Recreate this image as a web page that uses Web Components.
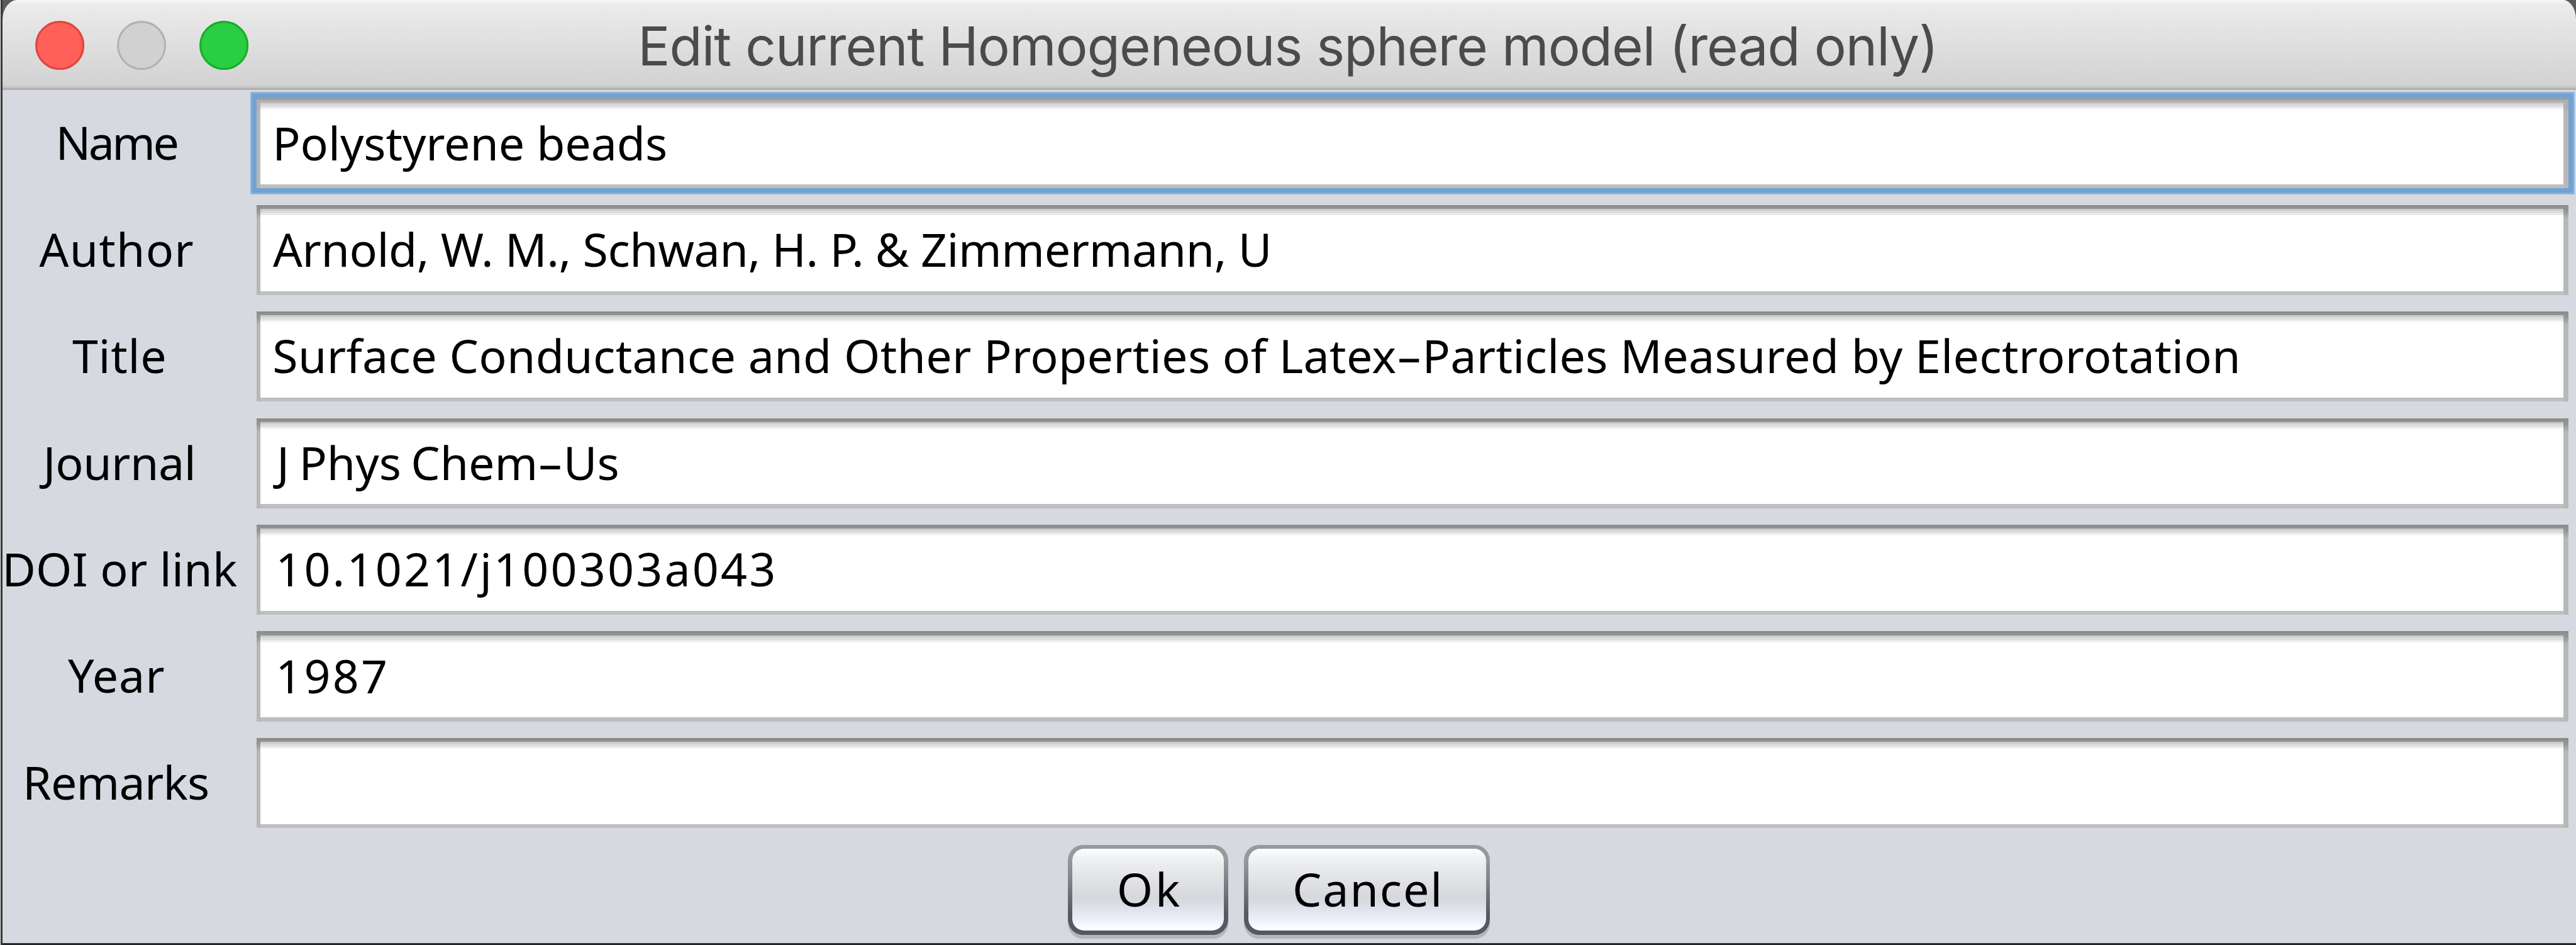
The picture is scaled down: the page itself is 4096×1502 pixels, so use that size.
<!DOCTYPE html>
<html lang="en">
<head>
<meta charset="utf-8">
<title>Edit current Homogeneous sphere model (read only)</title>
<style>
  /* 1rem is one hundred design units */
  html { font-size: 78.198px; }
  body { margin: 0; width: 4096px; height: 1502px; overflow: hidden; background: #3a3c3b; }
  .dash { display: inline-block; transform: scaleX(1.75); margin: 0 .12em 0 .11em; }
</style>
</head>
<body>
<dialog-window>
  <title-bar slot="title"><fit-text start="13.01" span="26.24">Edit current Homogeneous sphere model (read only)</fit-text></title-bar>
  <form-row focused><fit-text slot="label" start="1.17" span="2.38">Name</fit-text><fit-text start=".33" span="7.90">Polystyrene beads</fit-text></form-row>
  <form-row><fit-text slot="label" start=".75" span="3.13">Author</fit-text><fit-text start=".25" span="20.24">Arnold, W. M., Schwan, H. P. &amp; Zimmermann, U</fit-text></form-row>
  <form-row><fit-text slot="label" start="1.42" span="1.87">Title</fit-text><fit-text start=".28" span="39.91">Surface Conductance and Other Properties of Latex<span class="dash">-</span>Particles Measured by Electrorotation</fit-text></form-row>
  <form-row><fit-text slot="label" start=".75" span="3.11">Journal</fit-text><fit-text start=".25" span="7.00" style="word-spacing:-.05em">J Phys Chem<span class="dash">-</span>Us</fit-text></form-row>
  <form-row><fit-text slot="label" start=".08" span="4.69">DOI or link</fit-text><fit-text start=".38" span="10.04">10.1021/j100303a043</fit-text></form-row>
  <form-row><fit-text slot="label" start="1.33" span="1.96">Year</fit-text><fit-text start=".38" span="2.16">1987</fit-text></form-row>
  <form-row><fit-text slot="label" start=".50" span="3.67">Remarks</fit-text></form-row>
  <push-button slot="actions" style="width:3.25rem"><fit-text start=".96" span="1.23">Ok</fit-text></push-button>
  <push-button slot="actions" style="width:5rem"><fit-text start=".95" span="2.92">Cancel</fit-text></push-button>
</dialog-window>

<script>
const root = (el, html) => {
  const s = el.attachShadow({ mode: 'open' });
  s.innerHTML = html;
  return s;
};

/* One line of text whose ink begins at `start` and covers `span` (rem). */
class FitText extends HTMLElement {
  connectedCallback() {
    const s = root(this, `<style>
      :host { display: block; white-space: nowrap; }
      .line { display: inline-block; font-kerning: normal; font-variant-ligatures: none; }
    </style><span class="line"><slot></slot></span>`);
    const rem = parseFloat(getComputedStyle(document.documentElement).fontSize);
    const cs = getComputedStyle(this);
    const ctx = document.createElement('canvas').getContext('2d');
    ctx.font = `${cs.fontWeight} ${cs.fontSize} ${cs.fontFamily}`;
    const text = this.textContent;
    const m = ctx.measureText(text);
    const left = -m.actualBoundingBoxLeft;
    const right = m.width - m.actualBoundingBoxRight;
    const ink = s.querySelector('.line').getBoundingClientRect().width - left - right;
    const gap = (this.getAttribute('span') * rem - ink) / (text.length - 1);
    this.style.letterSpacing = gap.toFixed(3) + 'px';
    this.style.marginLeft = (this.getAttribute('start') * rem - left).toFixed(2) + 'px';
  }
}

class TitleBar extends HTMLElement {
  constructor() {
    super();
    root(this, `<style>
      :host { display: flex; height: 1.83rem; box-sizing: border-box; overflow: hidden;
        color: #4b4b4b; font: 400 1.09rem/1.877rem Inter, "Liberation Sans", sans-serif;
        background:
          linear-gradient(#c4c4c4, #c4c4c4) 0 1.75rem / 100% .04rem no-repeat,
          linear-gradient(#b0b0b0, #b0b0b0) 0 1.79rem / 100% .04rem no-repeat,
          linear-gradient(#f6f6f6 0 .04rem, #eeeeee .04rem .08rem, #ebebeb .1rem, #d2d2d2 1.75rem);
        border-radius: .30rem .26rem 0 0 / .40rem .40rem 0 0; }
      .lights { display: flex; gap: .665rem; padding: .42rem 0 0 .67rem; height: 1rem; width: 4.33rem; box-sizing: content-box; margin-right: -5rem; }
      svg { width: 1rem; height: 1rem; flex: none; display: block; }
      circle { stroke-width: 4; }
    </style>
    <div class="lights">
      <svg viewBox="0 0 100 100"><circle cx="50" cy="50" r="48" fill="#ff6058" stroke="#e2443e"/></svg>
      <svg viewBox="0 0 100 100"><circle cx="50" cy="50" r="48" fill="#d1d1d1" stroke="#b2b2b2"/></svg>
      <svg viewBox="0 0 100 100"><circle cx="50" cy="50" r="48" fill="#29ce42" stroke="#17ae29"/></svg>
    </div>
    <slot></slot>`);
  }
}

class FormRow extends HTMLElement {
  constructor() {
    super();
    root(this, `<style>
      :host { display: flex; height: 1.83rem; color: #000; }
      .label { width: 5.17rem; flex: none; line-height: 1.79rem; }
      .field { flex: 1; box-sizing: border-box; padding: .08rem .09rem .08rem .08rem; line-height: 1.63rem;
        background:
          linear-gradient(#bfbfbf, #bfbfbf) .08rem 100% / calc(100% - .17rem) .08rem no-repeat,
          linear-gradient(#8b8c8c 0 .04rem, #929292 .04rem .1rem, #b8b8b8 .28rem); }
      .paper { height: 100%;
        background: linear-gradient(#cccccc 0 .04rem, #dcdcdc .04rem .085rem, #ececec .085rem .125rem, #fdfdfd .125rem .165rem, #fff .165rem); }
      :host([focused]) .field { box-shadow: 0 0 0 .09rem #70a3d3, 0 0 0 .125rem #8aaed8;
        background:
          linear-gradient(#bfbfbf, #bfbfbf) .08rem 100% / calc(100% - .17rem) .08rem no-repeat,
          linear-gradient(#a0a0a0 0 .04rem, #b0b0b0 .04rem .24rem, #b8b8b8 .25rem); }
    </style>
    <div class="label"><slot name="label"></slot></div>
    <div class="field"><div class="paper"><slot></slot></div></div>`);
  }
}

class PushButton extends HTMLElement {
  constructor() {
    super();
    root(this, `<style>
      :host { display: block; height: 1.83rem; box-sizing: border-box; padding: .08rem;
        border-radius: .31rem; line-height: 1.645rem; color: #000;
        background: linear-gradient(#949a9e 0 16%, #7d8387 40%, #565960 78%);
        box-shadow: 0 .08rem 0 #b4b7bc; }
      .face { height: 100%; border-radius: .24rem;
        background: linear-gradient(#fbfcfc 0, #f2f3f4 10%, #e9eaec 24%, #d6d8dc 58%, #d6d9e1 64%, #e3e7f0 78%, #edf1fb 88%, #fbfcff 97%); }
    </style><div class="face"><slot></slot></div>`);
  }
}

class DialogWindow extends HTMLElement {
  constructor() {
    super();
    root(this, `<style>
      :host { display: block; height: 1502px; box-sizing: border-box; padding: 0 0 .04rem .05rem;
        font: 400 .94rem/1.77rem "Noto Sans", "Open Sans", sans-serif;
        background: linear-gradient(90deg, #e4e6e6 0 .013rem, #373b38 .013rem .05rem, #242528 .05rem); }
      .win { height: 100%; display: flex; flex-direction: column; background: linear-gradient(#5a5a5a 0 .5rem, #d6d9e0 .5rem); }
      .form { display: flex; flex-direction: column; gap: .3367rem; padding: .17rem .16rem 0 0; }
      .actions { display: flex; gap: .33rem; padding: .34rem 0 0 21.67rem; }
    </style>
    <div class="win">
      <slot name="title"></slot>
      <div class="form"><slot></slot></div>
      <div class="actions"><slot name="actions"></slot></div>
    </div>`);
  }
}

customElements.define('dialog-window', DialogWindow);
customElements.define('title-bar', TitleBar);
customElements.define('form-row', FormRow);
customElements.define('push-button', PushButton);
customElements.define('fit-text', FitText);
</script>
</body>
</html>
